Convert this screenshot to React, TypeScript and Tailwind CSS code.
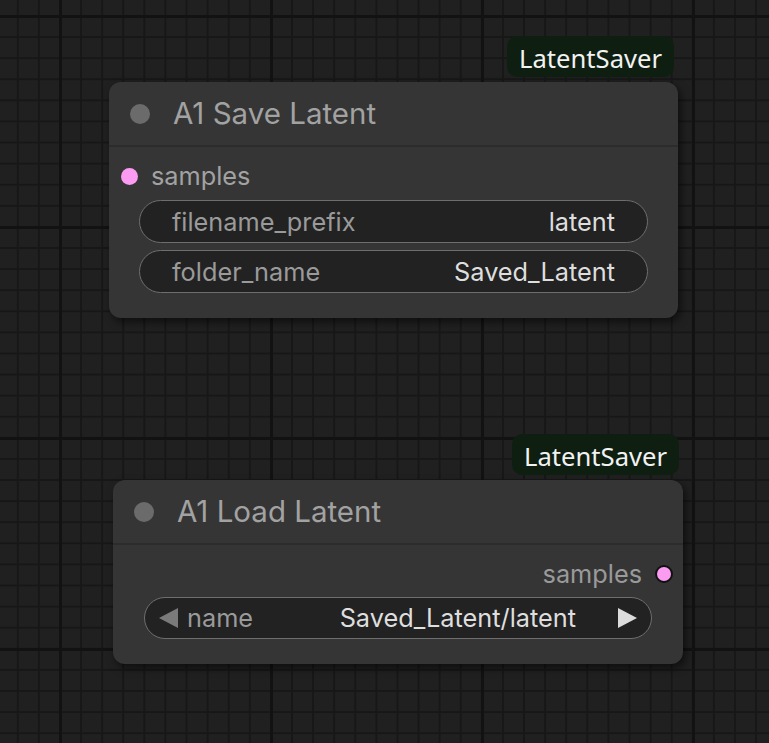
type Widget = { label: string; value: string };

function Badge({ text }: { text: string }) {
  return (
    <div className="absolute right-[4px] bottom-full mb-[5px] h-[41px] px-[12px] pt-[5px] flex items-center rounded-[10px] bg-[#0e1f11] text-[#f2f2f2] text-[25.6px] font-['Noto_Sans',sans-serif] whitespace-nowrap">
      {text}
    </div>
  );
}

function Header({ title }: { title: string }) {
  return (
    <div className="h-[65px] flex items-center pl-[21px] gap-[23px] border-b-2 border-[#2c2c2c]">
      <div className="w-[20px] h-[20px] rounded-full bg-[#6b6b6b]" />
      <span className="text-[29.5px] text-[#a2a2a2]">{title}</span>
    </div>
  );
}

function Field({ label, value }: Widget) {
  return (
    <div className="h-[43px] flex items-center justify-between px-[32px] rounded-full bg-[#222222] border-[1.5px] border-[#6e6e6e] text-[25.3px]">
      <span className="text-[#9a9a9a]">{label}</span>
      <span className="text-[#dedede]">{value}</span>
    </div>
  );
}

function SaveNode() {
  const widgets: Widget[] = [
    { label: "filename_prefix", value: "latent" },
    { label: "folder_name", value: "Saved_Latent" },
  ];
  return (
    <div className="absolute left-[109px] top-[82px] w-[569px] h-[236px] rounded-[12px] bg-[#353535] shadow-[3px_4px_8px_rgba(0,0,0,0.55)]">
      <Badge text="LatentSaver" />
      <Header title="A1 Save Latent" />
      <div className="h-[32px] mt-[13px] flex items-center pl-[12px] gap-[13px]">
        <div className="w-[17px] h-[17px] rounded-full bg-[#fb9cf2]" />
        <span className="text-[25.3px] text-[#a2a2a2]">samples</span>
      </div>
      <div className="mt-[8px] px-[30px] flex flex-col gap-[7px]">
        {widgets.map((w) => (
          <Field key={w.label} {...w} />
        ))}
      </div>
    </div>
  );
}

function LoadNode() {
  return (
    <div className="absolute left-[113px] top-[480px] w-[570px] h-[184px] rounded-[12px] bg-[#353535] shadow-[3px_4px_8px_rgba(0,0,0,0.55)]">
      <Badge text="LatentSaver" />
      <Header title="A1 Load Latent" />
      <div className="h-[32px] mt-[13px] flex items-center justify-end pr-[10px] gap-[13px]">
        <span className="text-[25.3px] text-[#9a9a9a]">samples</span>
        <div className="w-[18px] h-[18px] rounded-full bg-[#fb9cf2] border-2 border-[#111111]" />
      </div>
      <div className="mt-[7px] px-[31px]">
        <div className="h-[42px] flex items-center pl-[13px] pr-[13px] rounded-full bg-[#222222] border-[1.5px] border-[#6e6e6e] text-[25.3px]">
          <svg width="22" height="22" viewBox="0 0 22 22" className="shrink-0">
            <path d="M1 11 L20 1 L20 21 Z" fill="#7a7a7a" />
          </svg>
          <span className="ml-[7px] text-[#9a9a9a]">name</span>
          <span className="ml-auto text-[#dedede]">Saved_Latent/latent</span>
          <svg width="22" height="22" viewBox="0 0 22 22" className="ml-[40px] shrink-0">
            <path d="M21 11 L2 1 L2 21 Z" fill="#dcdcdc" />
          </svg>
        </div>
      </div>
    </div>
  );
}

export default function App() {
  return (
    <div className="relative w-[769px] h-[743px] overflow-hidden bg-[#202020] font-['Inter',sans-serif] bg-[image:linear-gradient(to_right,#121212_0_3px,transparent_3px),linear-gradient(to_bottom,#121212_0_3px,transparent_3px),linear-gradient(to_right,#171717_0_2px,transparent_2px),linear-gradient(to_bottom,#171717_0_2px,transparent_2px)] bg-[size:211px_211px,211px_211px,21.1px_21.1px,21.1px_21.1px] bg-[position:59px_15px]">
      <SaveNode />
      <LoadNode />
    </div>
  );
}
